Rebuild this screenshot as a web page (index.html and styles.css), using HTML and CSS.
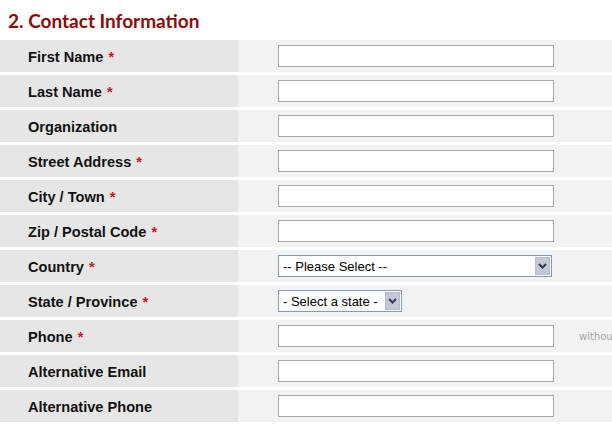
FILE: index.html
```html
<!DOCTYPE html>
<html>
<head>
<meta charset="utf-8">
<link rel="stylesheet" href="styles.css">
</head>
<body>
<h2 class="section-title">2. Contact Information</h2>
<div class="form">
  <div class="row"><div class="label">First Name <span class="req">*</span></div><div class="field"><input class="text" type="text"></div></div>
  <div class="row"><div class="label">Last Name <span class="req">*</span></div><div class="field"><input class="text" type="text"></div></div>
  <div class="row"><div class="label">Organization</div><div class="field"><input class="text" type="text"></div></div>
  <div class="row"><div class="label">Street Address <span class="req">*</span></div><div class="field"><input class="text" type="text"></div></div>
  <div class="row"><div class="label">City / Town <span class="req">*</span></div><div class="field"><input class="text" type="text"></div></div>
  <div class="row"><div class="label">Zip / Postal Code <span class="req">*</span></div><div class="field"><input class="text" type="text"></div></div>
  <div class="row"><div class="label">Country <span class="req">*</span></div><div class="field">
    <div class="select select-wide"><span class="select-text">-- Please Select --</span><span class="select-btn"><svg width="9" height="6" viewBox="0 0 9 6"><path d="M1 1 L4.5 4.5 L8 1" fill="none" stroke="#2f3b55" stroke-width="2"/></svg></span></div>
  </div></div>
  <div class="row"><div class="label">State / Province <span class="req">*</span></div><div class="field">
    <div class="select select-small"><span class="select-text">- Select a state -</span><span class="select-btn"><svg width="9" height="6" viewBox="0 0 9 6"><path d="M1 1 L4.5 4.5 L8 1" fill="none" stroke="#2f3b55" stroke-width="2"/></svg></span></div>
  </div></div>
  <div class="row"><div class="label">Phone <span class="req">*</span></div><div class="field"><input class="text" type="text"><span class="hint">without spaces</span></div></div>
  <div class="row"><div class="label">Alternative Email</div><div class="field"><input class="text" type="text"></div></div>
  <div class="row"><div class="label">Alternative Phone</div><div class="field"><input class="text" type="text"></div></div>
</div>
</body>
</html>
```
FILE: styles.css
```css
html, body {
  margin: 0;
  padding: 0;
  background: #fff;
  overflow: hidden;
}
body {
  font-family: "Liberation Sans", Arial, sans-serif;
  width: 612px;
}
.section-title {
  margin: 0;
  padding: 9px 0 0 8px;
  height: 32px;
  box-sizing: border-box;
  font-family: "Lato", "Open Sans", sans-serif;
  font-weight: 700;
  font-size: 19px;
  line-height: 23px;
  color: #8b0a0a;
}
.form {
  display: flex;
  flex-direction: column;
  gap: 3px;
  padding-top: 8px;
}
.row {
  display: flex;
  height: 32px;
}
.label {
  width: 238px;
  flex: none;
  background: #e6e6e6;
  box-sizing: border-box;
  padding: 1px 0 0 28px;
  display: flex;
  align-items: center;
  font-weight: 700;
  font-size: 14.6px;
  color: #111;
  white-space: pre;
}
.req {
  color: #d4141c;
  margin-left: 1px;
}
.field {
  flex: 1;
  background: #f2f2f2;
  display: flex;
  align-items: center;
  padding-left: 40px;
  white-space: nowrap;
  overflow: hidden;
}
.text {
  width: 276px;
  height: 22px;
  box-sizing: border-box;
  margin: 0;
  border: 1px solid #a9a9a9;
  background: #fff;
  padding: 0 3px;
  flex: none;
}
.hint {
  margin-left: 25px;
  color: #a6a6a6;
  font-family: "DejaVu Sans", Verdana, sans-serif;
  font-size: 10px;
}
.select {
  display: flex;
  align-items: stretch;
  height: 22px;
  box-sizing: border-box;
  border: 1px solid #7f9db9;
  background: #fff;
  font-size: 13px;
  color: #000;
  flex: none;
}
.select-wide { width: 274px; }
.select-small { width: 124px; }
.select-text {
  flex: 1;
  display: flex;
  align-items: center;
  padding-left: 4px;
}
.select-btn {
  width: 15px;
  margin: 1px;
  background: #c5c6d6;
  border: 1px solid #b8bccb;
  display: flex;
  align-items: center;
  justify-content: center;
  box-sizing: border-box;
}
```
